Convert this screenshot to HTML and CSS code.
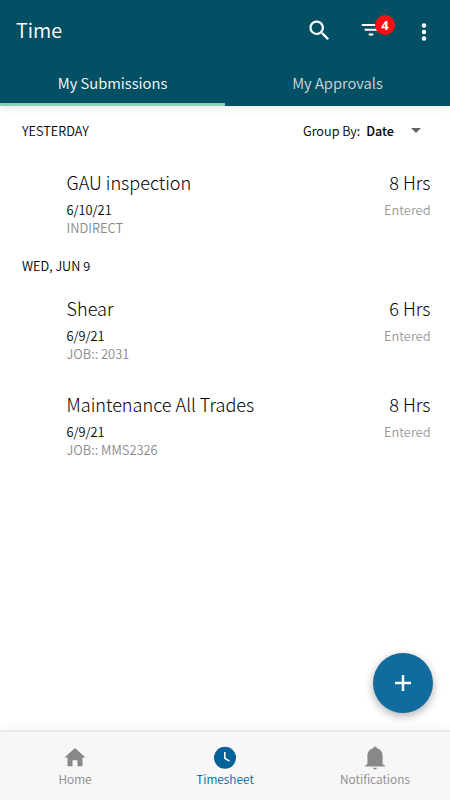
FILE: index.html
```html
<!DOCTYPE html>
<html lang="en">
<head>
<meta charset="utf-8">
<title>Time</title>
<link rel="stylesheet" href="styles.css">
</head>
<body>
<div class="app">
  <header class="header">
    <div class="toolbar">
      <h1 class="title"><span>Time</span></h1>
      <svg class="icon search" viewBox="0 0 24 24"><path d="M15.5 14h-.79l-.28-.27A6.47 6.47 0 0 0 16 9.5 6.5 6.5 0 1 0 9.5 16c1.61 0 3.09-.59 4.23-1.57l.27.28v.79l5 4.99L20.49 19l-4.99-5zm-6 0C7.01 14 5 11.99 5 9.5S7.01 5 9.5 5 14 7.01 14 9.5 11.99 14 9.5 14z"/></svg>
      <div class="filter">
        <svg class="icon" viewBox="0 0 24 24"><path d="M9.500 18h5v-2.200h-5v2.200zM2 5.500v2.200h20V5.500H2zm3 7.400h14v-2.200H5v2.200z"/></svg>
        <span class="badge">4</span>
      </div>
      <svg class="icon more" viewBox="0 0 24 24"><circle cx="12" cy="5.500" r="2.250"/><circle cx="12" cy="12" r="2.250"/><circle cx="12" cy="18.500" r="2.250"/></svg>
    </div>
    <nav class="tabs">
      <a class="tab active"><span>My Submissions</span></a>
      <a class="tab"><span>My Approvals</span></a>
    </nav>
  </header>
  <main class="content">
    <div class="group first">
      <span class="day">YESTERDAY</span>
      <div class="group-by"><span>Group By:</span><b>Date</b><i class="caret"></i></div>
    </div>
    <article class="entry">
      <div class="row main"><span>GAU inspection</span><span>8 Hrs</span></div>
      <div class="row meta"><span>6/10/21</span><span class="muted">Entered</span></div>
      <div class="row job"><span>INDIRECT</span></div>
    </article>
    <div class="group"><span class="day">WED, JUN 9</span></div>
    <article class="entry">
      <div class="row main"><span>Shear</span><span>6 Hrs</span></div>
      <div class="row meta"><span>6/9/21</span><span class="muted">Entered</span></div>
      <div class="row job"><span>JOB:: 2031</span></div>
    </article>
    <article class="entry">
      <div class="row main"><span>Maintenance All Trades</span><span>8 Hrs</span></div>
      <div class="row meta"><span>6/9/21</span><span class="muted">Entered</span></div>
      <div class="row job"><span>JOB:: MMS2326</span></div>
    </article>
  </main>
  <button class="fab" aria-label="Add"><svg viewBox="0 0 16 16"><path d="M6.800 0h2.400v6.800H16v2.400H9.200V16H6.800V9.200H0V6.800h6.800z"/></svg></button>
  <footer class="bottom">
    <a class="item"><svg viewBox="0 0 24 24"><path d="M4.500 20.300V11.500H1.500L12 2l10.500 9.500h-3v8.800h-5v-6h-5v6z"/></svg><span>Home</span></a>
    <a class="item active"><svg viewBox="0 0 24 24"><circle cx="12" cy="11.700" r="11"/><path class="hands" d="M11.800 5.900v6.400l4.700 2.800"/></svg><span>Timesheet</span></a>
    <a class="item"><svg viewBox="0 0 24 24"><path d="M12 23.500a2 2 0 0 0 2-1.700h-4a2 2 0 0 0 2 1.700zM19.600 18.300V10C19.600 6 17.400 3.300 13.800 2.300a1.800 1.800 0 0 0-3.600 0C6.600 3.300 4.400 6 4.400 10v8.300L2 19.800v.7h20v-.7z"/></svg><span>Notifications</span></a>
  </footer>
</div>
</body>
</html>
```
FILE: styles.css
```css
* { box-sizing: border-box; }
body {
  margin: 0;
  font-family: "Noto Sans CJK SC", "Noto Sans", sans-serif;
  font-weight: 300;
  color: #000;
}
.app {
  position: relative;
  width: 450px;
  height: 800px;
  display: flex;
  flex-direction: column;
  overflow: hidden;
  background: #fff;
}
.header {
  height: 106px;
  background: #035064;
  color: #fff;
  box-shadow: 0 1px 9px rgba(0, 0, 0, .1);
}
.toolbar {
  height: 60px;
  display: flex;
  align-items: center;
  padding: 0 14px 0 16px;
}
.title {
  margin: 0 auto 0 0;
  font-size: 19.8px;
  line-height: 24px;
  font-weight: 350;
}
.icon { display: block; width: 24px; height: 24px; fill: #fff; }
.search { width: 27px; height: 27px; margin-right: 27px; }
.filter { position: relative; margin-right: 30px; }
.filter .icon { width: 22px; height: 24px; }
.badge {
  position: absolute;
  left: 15px;
  top: -3px;
  width: 20px;
  height: 20px;
  border-radius: 50%;
  background: #fa1010;
  text-align: center;
  font: 700 13px/20px "Open Sans", sans-serif;
}
.more { margin-top: 3px; }
.tabs { height: 46px; display: flex; }
.tab {
  flex: 1;
  text-align: center;
  font-size: 14.8px;
  line-height: 46px;
  font-weight: 350;
  color: #d5d8da;
}
.tab.active { color: #fff; border-bottom: 3px solid #8fceb4; }
.content { flex: 1; }
.group {
  height: 30px;
  padding: 0 29px 0 22px;
  display: flex;
  justify-content: space-between;
  align-items: center;
  font-size: 12.7px;
  line-height: 18px;
  font-weight: 350;
}
.group.first { height: 49px; }
.group-by { display: flex; align-items: center; }
.group-by b { margin-left: 6px; font-size: 12.6px; font-weight: 500; }
.caret {
  margin-left: 17px;
  border: 5px solid transparent;
  border-top-color: #666;
  border-bottom: 0;
}
.entry { height: 96px; padding: 15px 19.5px 0 66.5px; }
.row { display: flex; justify-content: space-between; }
.main { font-size: 18.1px; line-height: 24px; }
.meta { font-size: 12.8px; line-height: 18px; margin-top: 7px; font-weight: 350; }
.job { font-size: 12.9px; line-height: 17px; color: #888; font-weight: 350; }
.muted { color: #999; }
.fab {
  position: absolute;
  left: 373px;
  top: 653px;
  width: 60px;
  height: 60px;
  padding: 0;
  border: 0;
  border-radius: 50%;
  background: #106b9f;
  box-shadow: 0 3px 10px rgba(0, 0, 0, .32);
  display: grid;
  place-items: center;
}
.fab svg { width: 16px; height: 16px; fill: #fff; }
.bottom {
  height: 70px;
  display: flex;
  background: #f7f7f7;
  border-top: 2px solid #e8ebea;
  box-shadow: 0 -1px 12px rgba(0, 0, 0, .06);
}
.item {
  flex: 1;
  display: flex;
  flex-direction: column;
  align-items: center;
  padding-top: 14px;
  font-size: 11.9px;
  line-height: 18px;
  font-weight: 350;
  color: #888;
}
.item svg { width: 24px; height: 24px; fill: #888; }
.item.active { color: #046199; }
.item.active svg { fill: #046199; }
.item .hands { fill: none; stroke: #fff; stroke-width: 1.6; }
```
